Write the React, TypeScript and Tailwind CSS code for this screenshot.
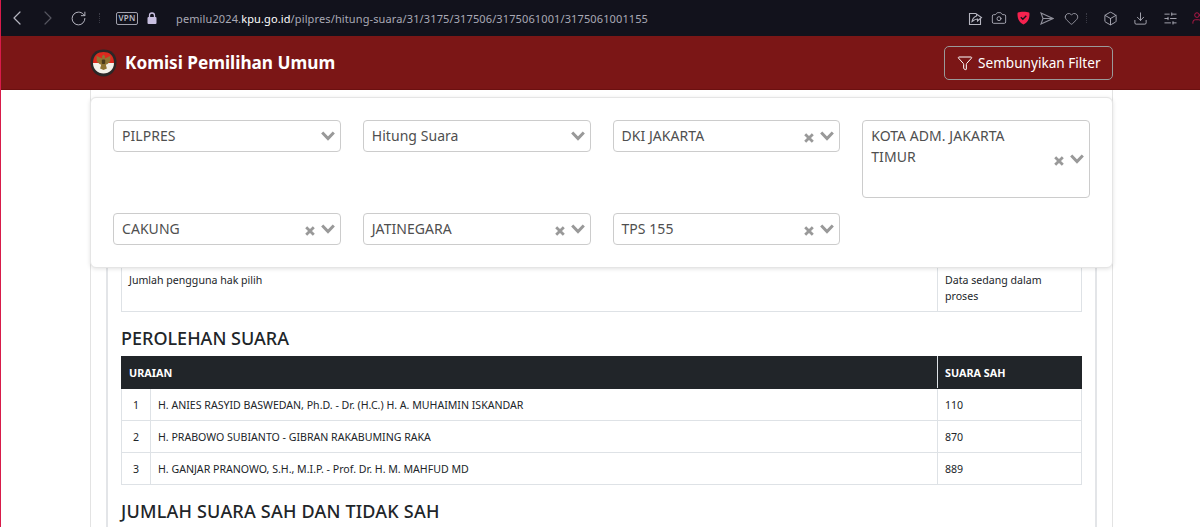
import {
  Box,
  Camera,
  ChevronLeft,
  ChevronRight,
  Download,
  Funnel,
  Heart,
  RotateCw,
  SlidersHorizontal,
  User,
} from "lucide-react";

const font = { fontFamily: '"Noto Sans", sans-serif' };

function Caret() {
  return (
    <svg width="14" height="10" viewBox="0 0 14 10" className="shrink-0">
      <path d="M1.2 1.500 7 7.500l5.800-6" fill="none" stroke="#999" strokeWidth="3" />
    </svg>
  );
}

function Cross() {
  return (
    <svg width="10" height="10" viewBox="0 0 10 10" className="mt-[3px] shrink-0">
      <path d="M1.2 1.200l7.600 7.600M8.800 1.200l-7.600 7.600" fill="none" stroke="#999" strokeWidth="2.800" />
    </svg>
  );
}

function Select({ label, clear = false, tall = false }: { label: string; clear?: boolean; tall?: boolean }) {
  return (
    <div
      className={`flex items-center justify-between rounded border border-[#ccc] bg-white pl-2 pr-[5px] ${
        tall ? "h-[78px]" : "h-[32px]"
      }`}
    >
      <div
        className={`text-[14px] leading-[21px] tracking-[0.05px] text-[#4f4f4f] ${
          tall ? "w-[160px] self-start pt-[4px]" : "mb-[2px]"
        }`}
      >
        {label}
      </div>
      <div className="flex items-center gap-[6px]">
        {clear && <Cross />}
        <Caret />
      </div>
    </div>
  );
}

function Logo() {
  return (
    <svg width="27" height="28" viewBox="0 0 27 28" className="shrink-0">
      <path d="M13.500 .500C21 .500 26.500 5 26.500 13c0 8-5 14.500-13 14.500S.500 21 .500 13C.500 5 6 .500 13.500 .500z" fill="#2b2727" />
      <path d="M13.500 3C19 3 24 6 24 14H3C3 6 8 3 13.500 3z" fill="#dc2a1f" />
      <path d="M3 14h21c0 6-4.500 10.500-10.500 10.500S3 20 3 14z" fill="#f4f1ea" />
      <path
        d="M13.500 5.500l1.700 2-.6 2 2.400-.9 3.500-1.800-.3 5.700-2.700 2.500-1.700.8 1.100 3.700-3.400 1.500-3.400-1.500 1.100-3.700-1.700-.8-2.700-2.500-.3-5.700 3.500 1.800 2.400.9-.6-2z"
        fill="#8f7434"
      />
      <rect x="11.800" y="10.500" width="3.400" height="4.500" rx="1" fill="#4a3b1c" />
    </svg>
  );
}

const votes = [
  { no: 1, name: "H. ANIES RASYID BASWEDAN, Ph.D. - Dr. (H.C.) H. A. MUHAIMIN ISKANDAR", total: 110 },
  { no: 2, name: "H. PRABOWO SUBIANTO - GIBRAN RAKABUMING RAKA", total: 870 },
  { no: 3, name: "H. GANJAR PRANOWO, S.H., M.I.P. - Prof. Dr. H. M. MAHFUD MD", total: 889 },
];

export default function App() {
  return (
    <div className="relative h-[527px] overflow-hidden border-l border-[#d81b4a] bg-white text-[#212529]" style={font}>
      <div className="ml-[-1px] flex h-[36px] items-center bg-[#12121c] text-[#b9b9c4]">
        <ChevronLeft size={24} strokeWidth={1.2} className="ml-[5px] text-[#b5b5c0]" />
        <ChevronRight size={24} strokeWidth={1.2} className="ml-[7px] text-[#55555f]" />
        <RotateCw size={17} strokeWidth={1.4} className="ml-[10px] text-[#b5b5c0]" />
        <div className="ml-[12px] h-[10px] border-l border-dotted border-[#3a3a45]" />
        <div className="ml-[16px] flex h-[13px] w-[22px] items-center justify-center rounded-[2px] border border-[#a0a0ac] text-[8px] font-semibold leading-none tracking-[0.3px]">
          VPN
        </div>
        <svg width="10" height="12" viewBox="0 0 10 12" className="ml-[9px]">
          <path d="M2.500 5V3.500a2.500 2.500 0 0 1 5 0V5" fill="none" stroke="#c8bfe0" strokeWidth="1.300" />
          <rect x="0.500" y="5" width="9" height="7" rx="1" fill="#c8bfe0" />
        </svg>
        <div className="ml-[19px] text-[11px] leading-none tracking-[0.12px] text-[#a9a9b5]">
          pemilu2024.<span className="text-white">kpu.go.id</span>/pilpres/hitung-suara/31/3175/317506/3175061001/3175061001155
        </div>
        <div className="ml-auto mr-[-9px] flex items-center text-[#b5b5c0]">
          <span className="flex w-[24px] justify-center">
            <svg width="15" height="15" viewBox="0 0 15 15" fill="none" stroke="currentColor" strokeWidth="1.100">
              <path d="M8 2.500H1.500v11h11V8" />
              <path d="M4 10.500c.5-3 2-4.500 4.500-5.500V3l5 3.500-4 3.500V8c-2 0-3.500 1-5.500 2.500z" />
            </svg>
          </span>
          <span className="flex w-[24px] justify-center"><Camera size={16} strokeWidth={1.300} /></span>
          <span className="flex w-[24px] justify-center">
            <svg width="13" height="14" viewBox="0 0 13 14">
              <path d="M1 1.500C3 .500 10 .500 12 1.500c.5 0 .5 1 .5 2 0 5-2.500 8.500-6 10-3.500-1.500-6-5-6-10 0-1 0-2 .5-2z" fill="#f5224f" />
              <path d="M3.800 6.200 5.800 8.200 9.300 4.700" fill="none" stroke="#12121c" strokeWidth="1.400" />
            </svg>
          </span>
          <span className="flex w-[24px] justify-center text-[#8f8f9a]">
            <svg width="14" height="13" viewBox="0 0 14 13" fill="none" stroke="currentColor" strokeWidth="1.100">
              <path d="M1 1l12 5.500L1 12l2-5.500zM3 6.500h10" />
            </svg>
          </span>
          <span className="flex w-[24px] justify-center"><Heart size={15} strokeWidth={1.200} /></span>
          <span className="mx-[3px] h-[10px] border-l border-dotted border-[#3a3a45]" />
          <span className="ml-[5px] flex w-[30px] justify-center"><Box size={15} strokeWidth={1.400} /></span>
          <span className="flex w-[30px] justify-center"><Download size={15} strokeWidth={1.400} /></span>
          <span className="flex w-[30px] justify-center"><SlidersHorizontal size={15} strokeWidth={1.400} /></span>
          <span className="flex w-[24px] justify-center text-[#c2184b]"><User size={14} strokeWidth={1.500} /></span>
        </div>
      </div>

      <header className="flex h-[54px] items-center justify-between border-b border-[#6b1010] bg-[#7b1616] pl-[89px] pr-[87px]">
        <div className="flex items-center gap-2">
          <Logo />
          <span className="text-[17.2px] font-bold text-white">Komisi Pemilihan Umum</span>
        </div>
        <button className="mt-[1px] flex h-[34px] w-[169px] items-center gap-[5px] rounded-[5px] border border-[#9a9a9a] pl-3 text-[13.6px] text-white">
          <Funnel size={16} strokeWidth={1.500} />
          Sembunyikan Filter
        </button>
      </header>

      <div className="absolute left-[89px] top-[97px] w-[1023px] rounded-md border border-[#e5e5e5] bg-white p-[22px] shadow-[0_1px_4px_rgba(0,0,0,0.12)]">
        <div className="grid grid-cols-4 items-start gap-x-[22px] gap-y-[15px]">
          <Select label="PILPRES" />
          <Select label="Hitung Suara" />
          <Select label="DKI JAKARTA" clear />
          <Select label="KOTA ADM. JAKARTA TIMUR" clear tall />
          <Select label="CAKUNG" clear />
          <Select label="JATINEGARA" clear />
          <Select label="TPS 155" clear />
        </div>
      </div>

      <main className="ml-[89px] w-[1023px] border-x border-[#e3e3e3] px-[15px] pt-[172px]">
        <div className="border-x-2 border-[#e3e5e8] px-[13px] pb-10">
          <table className="w-full table-fixed border-collapse text-[10.6px] leading-[16px]">
            <colgroup>
              <col className="w-[29px]" />
              <col />
              <col className="w-[144px]" />
            </colgroup>
            <tbody>
              <tr>
                <td colSpan={2} className="h-[49px] border border-[#dee2e6] pb-1 pl-[7px] pr-2 pt-[9px] align-top">
                  Jumlah pengguna hak pilih
                </td>
                <td className="border border-[#dee2e6] pb-1 pl-[7px] pr-2 pt-[9px] align-top">Data sedang dalam proses</td>
              </tr>
            </tbody>
          </table>

          <h5 className="flex h-[44px] items-end pb-[6px] text-[18px] font-medium leading-[24px]">PEROLEHAN SUARA</h5>
          <table className="w-full table-fixed border-collapse text-[10.6px] leading-[16px]">
            <colgroup>
              <col className="w-[29px]" />
              <col />
              <col className="w-[144px]" />
            </colgroup>
            <thead>
              <tr className="h-[32px] bg-[#212529] text-left text-[10.8px] font-bold text-white">
                <th colSpan={2} className="border border-[#212529] border-r-[#dee2e6] pl-[7px] pr-2">URAIAN</th>
                <th className="border border-[#212529] pl-[7px] pr-2">SUARA SAH</th>
              </tr>
            </thead>
            <tbody>
              {votes.map((v) => (
                <tr key={v.no} className="h-[32px]">
                  <td className="border border-[#dee2e6] text-center">{v.no}</td>
                  <td className="border border-[#dee2e6] pl-[7px] pr-2">{v.name}</td>
                  <td className="border border-[#dee2e6] pl-[7px] pr-2">{v.total}</td>
                </tr>
              ))}
            </tbody>
          </table>
          <h5 className="mt-[14px] text-[18px] font-medium leading-[24px] tracking-[0.2px]">JUMLAH SUARA SAH DAN TIDAK SAH</h5>
        </div>
      </main>
    </div>
  );
}
